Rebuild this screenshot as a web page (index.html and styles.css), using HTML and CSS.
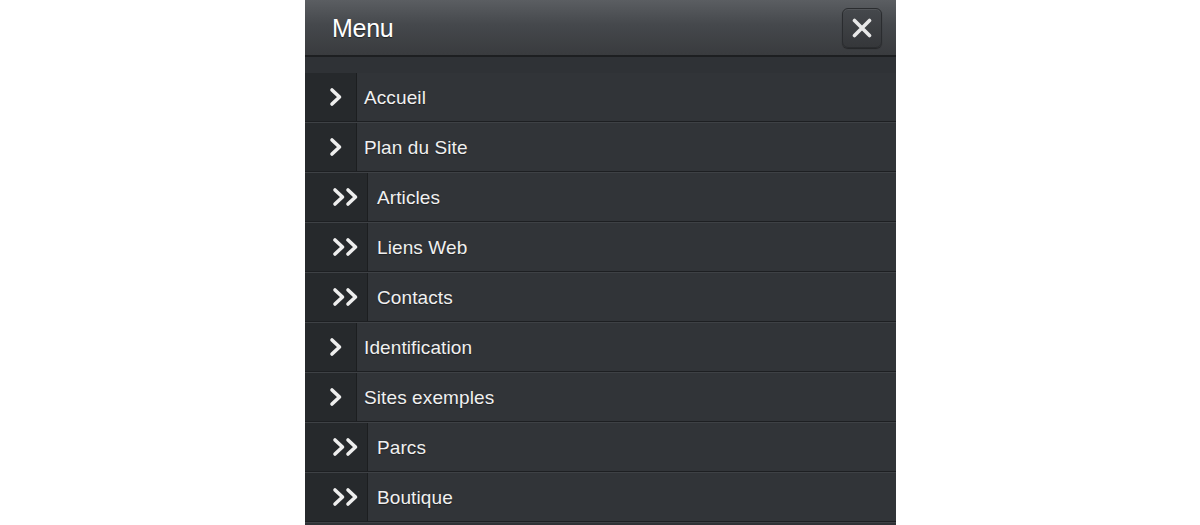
FILE: index.html
```html
<!DOCTYPE html>
<html lang="fr">
<head>
<meta charset="utf-8">
<title>Menu</title>
<link rel="stylesheet" href="styles.css">
</head>
<body>
<div class="panel">
  <header class="head">
    <span class="title">Menu</span>
    <button class="close" aria-label="Fermer">
      <svg width="20" height="20" viewBox="0 0 20 20"><path d="M2.5 2.5 L17.5 17.5 M17.5 2.5 L2.5 17.5" stroke="#e8e8e8" stroke-width="3.6" stroke-linecap="round"/></svg>
    </button>
  </header>
  <nav class="list">
    <a class="row"><span class="ico"><svg width="14" height="20" viewBox="0 0 14 20"><path d="M3 3 L10.5 10 L3 17" fill="none" stroke="#eeeeee" stroke-width="3.6" stroke-linecap="round" stroke-linejoin="round"/></svg></span><span class="lbl">Accueil</span></a>
    <a class="row"><span class="ico"><svg width="14" height="20" viewBox="0 0 14 20"><path d="M3 3 L10.5 10 L3 17" fill="none" stroke="#eeeeee" stroke-width="3.6" stroke-linecap="round" stroke-linejoin="round"/></svg></span><span class="lbl">Plan du Site</span></a>
    <a class="row sub"><span class="ico"><svg width="28" height="20" viewBox="0 0 28 20"><path d="M3 3 L10.5 10 L3 17 M16 3 L23.5 10 L16 17" fill="none" stroke="#eeeeee" stroke-width="3.6" stroke-linecap="round" stroke-linejoin="round"/></svg></span><span class="lbl">Articles</span></a>
    <a class="row sub"><span class="ico"><svg width="28" height="20" viewBox="0 0 28 20"><path d="M3 3 L10.5 10 L3 17 M16 3 L23.5 10 L16 17" fill="none" stroke="#eeeeee" stroke-width="3.6" stroke-linecap="round" stroke-linejoin="round"/></svg></span><span class="lbl">Liens Web</span></a>
    <a class="row sub"><span class="ico"><svg width="28" height="20" viewBox="0 0 28 20"><path d="M3 3 L10.5 10 L3 17 M16 3 L23.5 10 L16 17" fill="none" stroke="#eeeeee" stroke-width="3.6" stroke-linecap="round" stroke-linejoin="round"/></svg></span><span class="lbl">Contacts</span></a>
    <a class="row"><span class="ico"><svg width="14" height="20" viewBox="0 0 14 20"><path d="M3 3 L10.5 10 L3 17" fill="none" stroke="#eeeeee" stroke-width="3.6" stroke-linecap="round" stroke-linejoin="round"/></svg></span><span class="lbl">Identification</span></a>
    <a class="row"><span class="ico"><svg width="14" height="20" viewBox="0 0 14 20"><path d="M3 3 L10.5 10 L3 17" fill="none" stroke="#eeeeee" stroke-width="3.6" stroke-linecap="round" stroke-linejoin="round"/></svg></span><span class="lbl">Sites exemples</span></a>
    <a class="row sub"><span class="ico"><svg width="28" height="20" viewBox="0 0 28 20"><path d="M3 3 L10.5 10 L3 17 M16 3 L23.5 10 L16 17" fill="none" stroke="#eeeeee" stroke-width="3.6" stroke-linecap="round" stroke-linejoin="round"/></svg></span><span class="lbl">Parcs</span></a>
    <a class="row sub"><span class="ico"><svg width="28" height="20" viewBox="0 0 28 20"><path d="M3 3 L10.5 10 L3 17 M16 3 L23.5 10 L16 17" fill="none" stroke="#eeeeee" stroke-width="3.6" stroke-linecap="round" stroke-linejoin="round"/></svg></span><span class="lbl">Boutique</span></a>
  </nav>
</div>
</body>
</html>
```

FILE: styles.css
```css
html, body {
  margin: 0;
  padding: 0;
  background: #ffffff;
  height: 525px;
  overflow: hidden;
}

body {
  font-family: "Liberation Sans", Arial, sans-serif;
}

.panel {
  width: 591px;
  height: 525px;
  margin-left: 305px;
  background: #2f3236;
  display: flex;
  flex-direction: column;
}

.head {
  height: 55px;
  border-bottom: 2px solid #1d1f21;
  background: linear-gradient(to bottom, #5b5e62 0%, #45484c 45%, #393b3e 100%);
  display: flex;
  align-items: center;
  justify-content: space-between;
  padding: 0 14px 0 27px;
  box-sizing: content-box;
}

.title {
  color: #ffffff;
  font-size: 25px;
  letter-spacing: -0.3px;
  padding-top: 1px;
  text-shadow: 0 1px 1px rgba(0, 0, 0, 0.5);
}

.close {
  width: 40px;
  height: 40px;
  padding: 0;
  margin-top: 1px;
  border: 1px solid #2a2c2f;
  border-radius: 6px;
  background: linear-gradient(to bottom, #45484c, #35373a);
  box-shadow: inset 0 1px 0 rgba(255, 255, 255, 0.08), 0 1px 1px rgba(0, 0, 0, 0.4);
  display: flex;
  align-items: center;
  justify-content: center;
}

.list {
  padding-top: 16px;
  display: flex;
  flex-direction: column;
}

.row {
  display: flex;
  align-items: stretch;
  height: 48px;
  background: #313438;
  border-bottom: 1px solid #1d1f22;
  box-shadow: 0 1px 0 #3e4145;
  margin-bottom: 1px;
  text-decoration: none;
}

.ico {
  width: 52px;
  background: #26292c;
  border-right: 1px solid #1c1e20;
  display: flex;
  align-items: center;
  justify-content: flex-start;
  padding-left: 24px;
  box-sizing: border-box;
}

.sub .ico {
  width: 63px;
  padding-left: 27px;
}

.lbl {
  display: flex;
  align-items: center;
  padding-left: 7px;
  padding-top: 2px;
  color: #f0f0f0;
  font-size: 19px;
  letter-spacing: 0.1px;
  text-shadow: 0 1px 1px rgba(0, 0, 0, 0.4);
}

.sub .lbl {
  padding-left: 9px;
}
```
